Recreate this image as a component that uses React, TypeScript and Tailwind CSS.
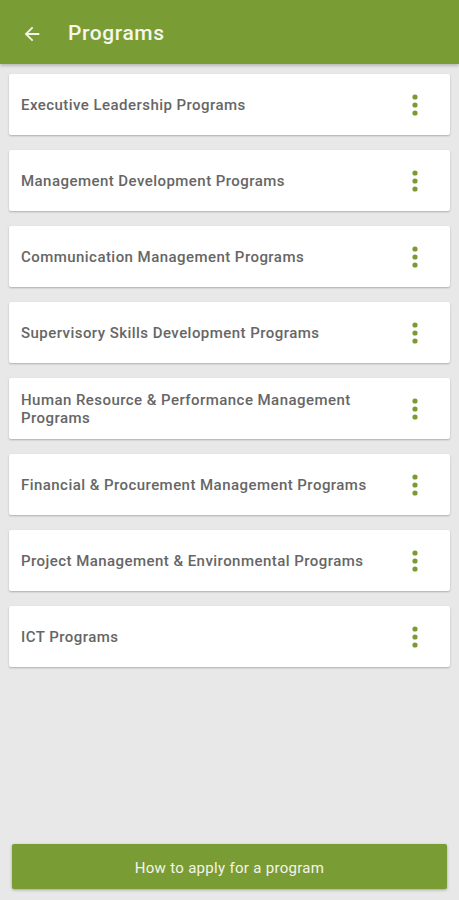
import React from "react"

const programs = [
  "Executive Leadership Programs",
  "Management Development Programs",
  "Communication Management Programs",
  "Supervisory Skills Development Programs",
  "Human Resource & Performance Management Programs",
  "Financial & Procurement Management Programs",
  "Project Management & Environmental Programs",
  "ICT Programs",
]

const Dots = () => (
  <svg width="6" height="22" viewBox="0 0 6 22" className="shrink-0">
    <circle cx="3" cy="3" r="2.6" fill="#7a9a33" />
    <circle cx="3" cy="11" r="2.6" fill="#7a9a33" />
    <circle cx="3" cy="19" r="2.6" fill="#7a9a33" />
  </svg>
)

const App = () => {
  return (
    <div className="flex h-[900px] w-[459px] flex-col bg-[#e8e8e8] font-['Roboto',sans-serif]">
      <div className="flex h-[64px] shrink-0 items-center bg-[#7a9c35] pt-[3px] shadow-[0_2px_3px_rgba(0,0,0,0.2)]">
        <svg width="22" height="22" viewBox="0 0 24 24" className="ml-[21px]">
          <path d="M20 11H7.83l5.59-5.59L12 4l-8 8 8 8 1.41-1.41L7.83 13H20v-2z" fill="#f4f4e8" />
        </svg>
        <h1 className="ml-[25px] text-[21px] font-medium tracking-[0.6px] text-[#f6f6ea]">Programs</h1>
      </div>

      <div className="flex flex-col gap-[15px] px-[9px] pt-[10px]">
        {programs.map((p) => (
          <div
            key={p}
            className="flex h-[61px] items-center justify-between rounded-[2px] bg-white pl-[12px] pr-[32px] shadow-[0_1px_2px_rgba(0,0,0,0.25)]"
          >
            <span className="pr-4 text-[15px] font-medium leading-[18px] tracking-[0.45px] text-[#666666]">{p}</span>
            <Dots />
          </div>
        ))}
      </div>

      <div className="mt-auto px-[12px] pb-[11px]">
        <button className="h-[45px] w-full rounded-[2px] bg-[#7a9c35] pt-[4px] text-[15px] tracking-[0.3px] text-[#f4f4ea] shadow-[0_1px_3px_rgba(0,0,0,0.3)]">
          How to apply for a program
        </button>
      </div>
    </div>
  )
}

export default App
